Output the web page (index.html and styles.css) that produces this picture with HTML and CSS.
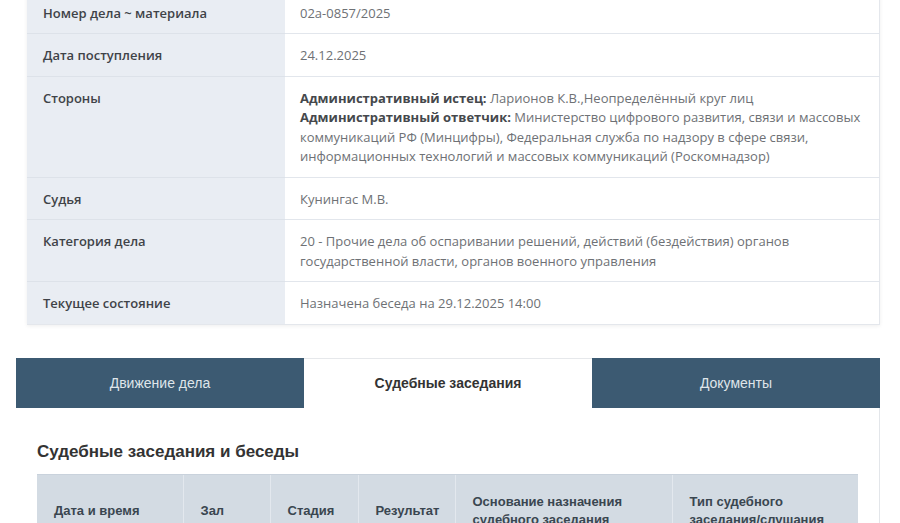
FILE: index.html
```html
<!DOCTYPE html>
<html lang="ru">
<head>
<meta charset="utf-8">
<link rel="stylesheet" href="styles.css">
</head>
<body>
<div class="info">
  <table class="info-table">
    <tr><th>Номер дела ~ материала</th><td>02а-0857/2025</td></tr>
    <tr><th>Дата поступления</th><td>24.12.2025</td></tr>
    <tr><th>Стороны</th><td><b>Административный истец:</b> Ларионов К.В.,Неопределённый круг лиц<br><b>Административный ответчик:</b> Министерство цифрового развития, связи и массовых коммуникаций РФ (Минцифры), Федеральная служба по надзору в сфере связи, информационных технологий и массовых коммуникаций (Роскомнадзор)</td></tr>
    <tr><th>Судья</th><td>Кунингас М.В.</td></tr>
    <tr><th>Категория дела</th><td>20 - Прочие дела об оспаривании решений, действий (бездействия) органов государственной власти, органов военного управления</td></tr>
    <tr><th>Текущее состояние</th><td>Назначена беседа на 29.12.2025 14:00</td></tr>
  </table>
</div>

<div class="case-tabs">
  <div class="tabs">
    <div class="tab">Движение дела</div>
    <div class="tab active">Судебные заседания</div>
    <div class="tab">Документы</div>
  </div>
  <div class="panel">
    <h2 class="panel-title">Судебные заседания и беседы</h2>
    <table class="sessions">
      <colgroup>
        <col class="c1"><col class="c2"><col class="c3"><col class="c4"><col class="c5"><col class="c6">
      </colgroup>
      <tr>
        <th>Дата и время</th>
        <th>Зал</th>
        <th>Стадия</th>
        <th>Результат</th>
        <th>Основание назначения судебного заседания</th>
        <th>Тип судебного заседания/слушания</th>
      </tr>
    </table>
  </div>
</div>
</body>
</html>
```

FILE: styles.css
```css
html, body {
  margin: 0;
  padding: 0;
  background: #ffffff;
  overflow: hidden;
}

body {
  height: 523px;
  font-family: "Open Sans", "Liberation Sans", sans-serif;
}

.info {
  margin: -8.5px 20px 0 27px;
  width: 853px;
  box-shadow: 0 1px 4px rgba(0, 0, 0, 0.07);
}

.info-table {
  width: 100%;
  border-collapse: collapse;
  font-size: 13px;
  line-height: 19.5px;
  border-right: 1px solid #e4e7ec;
}

.info-table th,
.info-table td {
  padding: 12px 15px 10px 15px;
  border-bottom: 1px solid #e2e6ec;
  vertical-align: top;
  text-align: left;
}

.info-table th {
  width: 227px;
  padding-left: 16px;
  background: #e9edf3;
  color: #3f4348;
  font-weight: 600;
  border-bottom-color: #dde2e9;
}

.info-table td {
  color: #6e7175;
  font-weight: 400;
  background: #ffffff;
}

.info-table td b {
  color: #45484c;
  font-weight: 700;
}

.info-table tr:last-child th,
.info-table tr:last-child td {
  border-bottom-color: #e4e7ec;
}

.case-tabs {
  margin: 33px 0 0 16px;
  width: 864px;
  font-family: "Liberation Sans", Arial, sans-serif;
}

.tabs {
  display: flex;
  height: 50px;
}

.tab {
  flex: 1 1 0;
  display: flex;
  align-items: center;
  justify-content: center;
  background: #3c5a72;
  color: #dfe5ea;
  font-size: 14px;
}

.tab.active {
  background: #ffffff;
  color: #333333;
  font-weight: 700;
  border-top: 1px solid #e6e8eb;
}

.panel {
  background: #ffffff;
  border-right: 1px solid #e3e6ea;
  padding: 34px 21px 0 21px;
  height: 200px;
}

.panel-title {
  margin: 0 0 12px 0;
  font-size: 17px;
  line-height: 20px;
  font-weight: 700;
  color: #333333;
}

.sessions {
  width: 821px;
  border-collapse: collapse;
  table-layout: fixed;
}

.sessions col.c1 { width: 146px; }
.sessions col.c2 { width: 87px; }
.sessions col.c3 { width: 88px; }
.sessions col.c4 { width: 97px; }
.sessions col.c5 { width: 217px; }
.sessions col.c6 { width: 186px; }

.sessions th {
  background: #d3dbe3;
  color: #3a4650;
  font-size: 13px;
  line-height: 18px;
  font-weight: 700;
  text-align: left;
  vertical-align: middle;
  padding: 18px 16px 18px 17px;
  border-top: 1px solid #c9d2dc;
  border-left: 1px solid #e3e8ee;
}

.sessions th:first-child {
  border-left: none;
}
```
